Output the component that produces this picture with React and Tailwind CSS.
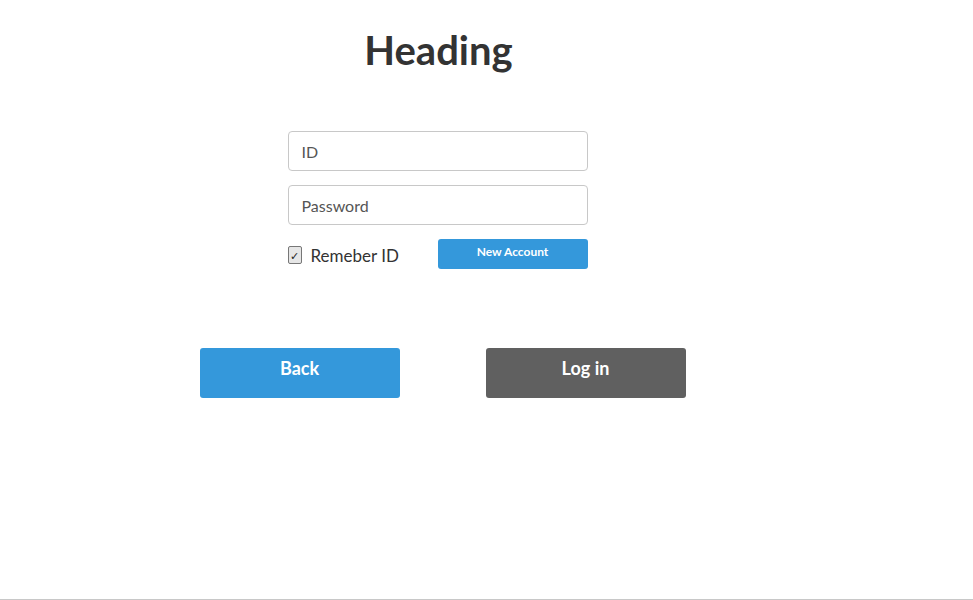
export default function App() {
  return (
    <div
      className="h-[600px] border-b border-[#c8c8c8] bg-white text-[#333]"
      style={{ fontFamily: 'Lato, "Open Sans", sans-serif' }}
    >
      <div className="flex w-[875px] flex-col items-center">
        <h1 className="mt-[24px] h-[52px] text-[40px] font-bold leading-[52px] text-[#333] ml-[2px]">Heading</h1>

        <form className="mt-[55px] flex w-[300px] flex-col" onSubmit={(e) => e.preventDefault()}>
          <input
            type="text"
            placeholder="ID"
            className="h-[40px] w-full rounded-[4px] border border-[#c8c8c8] px-[13px] text-[16px] text-[#333] placeholder:text-[#555] outline-none"
          />
          <input
            type="password"
            placeholder="Password"
            className="mt-[14px] h-[40px] w-full rounded-[4px] border border-[#c8c8c8] px-[13px] text-[16px] text-[#333] placeholder:text-[#555] outline-none"
          />
          <div className="mt-[14px] flex items-start justify-between">
            <label className="mt-[6px] flex items-center gap-[9px]">
              <span className="flex h-[18px] w-[14px] items-center justify-center rounded-[2px] border border-[#777] bg-[#e6e6e6] text-[11px] leading-none text-[#222]">
                ✓
              </span>
              <span className="pt-[2px] text-[17px] leading-[18px] text-[#333]">Remeber ID</span>
            </label>
            <button
              type="button"
              className="h-[30px] w-[150px] rounded-[3px] bg-[#3498db] pb-[5px] text-[12px] font-bold text-white"
            >
              New Account
            </button>
          </div>
        </form>

        <div className="mt-[79px] ml-[10px] flex gap-[86px]">
          <button
            type="button"
            className="h-[50px] w-[200px] rounded-[3px] bg-[#3498db] pb-[9px] text-[18px] font-bold text-white"
          >
            Back
          </button>
          <button
            type="button"
            className="h-[50px] w-[200px] rounded-[3px] bg-[#606060] pb-[9px] text-[18px] font-bold text-white"
          >
            Log in
          </button>
        </div>
      </div>
    </div>
  );
}
